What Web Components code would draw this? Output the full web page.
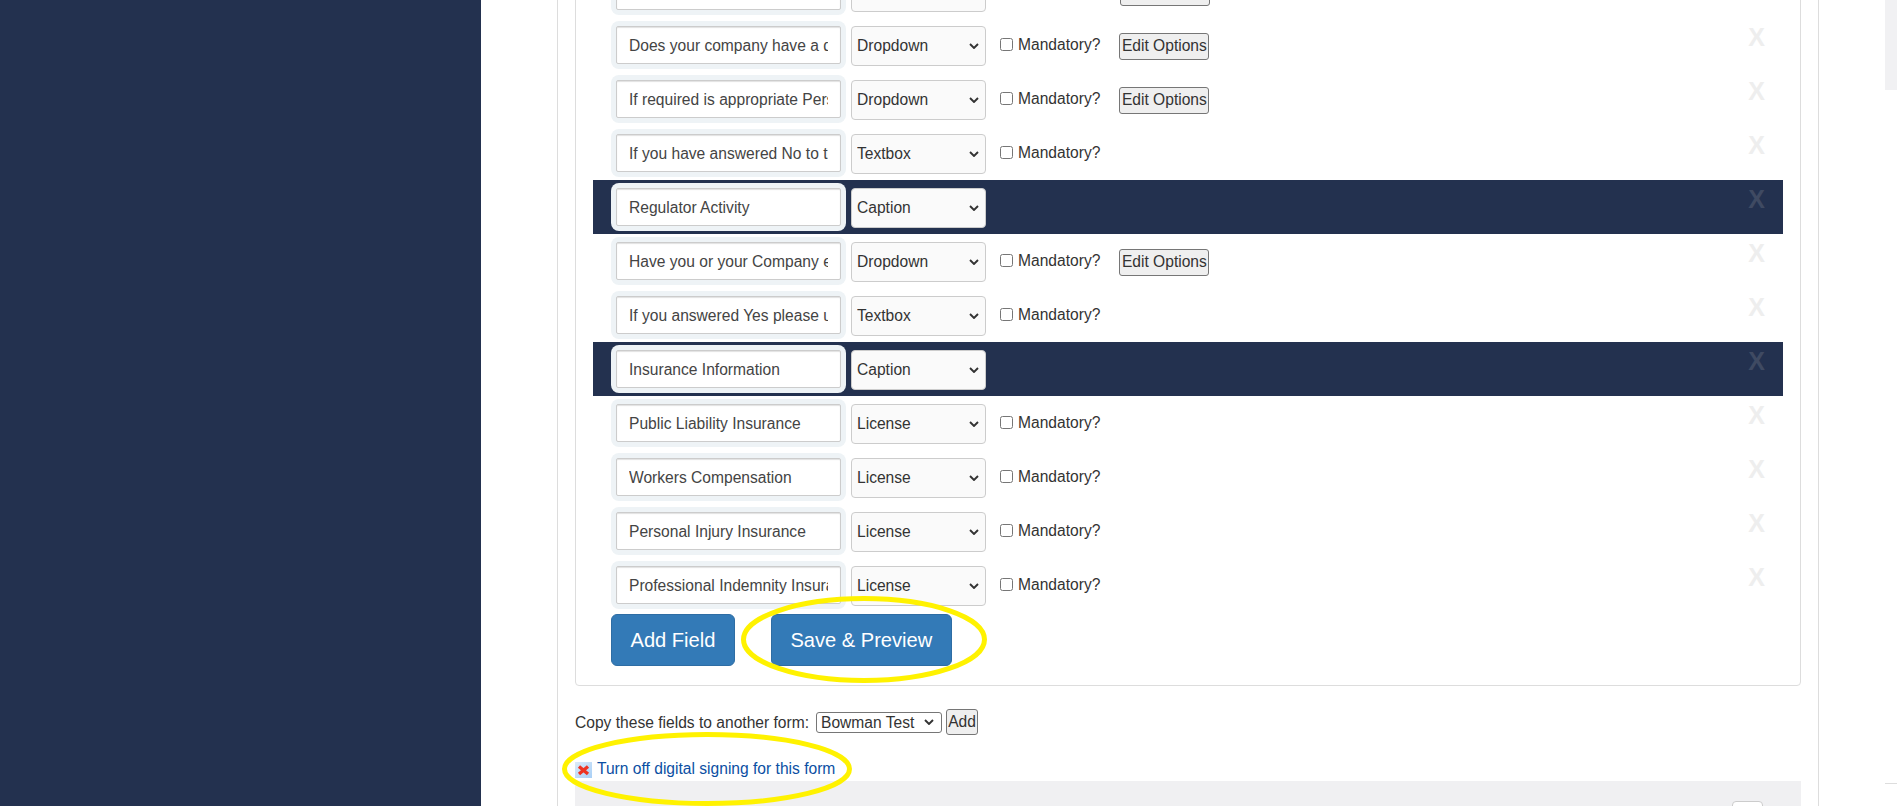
<!DOCTYPE html>
<html><head><meta charset="utf-8"><title>Form fields</title>
<style>
html,body{margin:0;padding:0;height:806px;overflow:hidden;background:#fff;font:15.6px "Liberation Sans",Arial,sans-serif;color:#333}
</style></head><body>
<app-shell>
  <form-sheet>
    <field-panel>
      <field-row type="Dropdown" edit ghost></field-row>
      <field-row label="Does your company have a documented policy" type="Dropdown" edit></field-row>
      <field-row label="If required is appropriate Personal Protective" type="Dropdown" edit></field-row>
      <field-row label="If you have answered No to the above" type="Textbox"></field-row>
      <field-row label="Regulator Activity" type="Caption"></field-row>
      <field-row label="Have you or your Company ever been" type="Dropdown" edit></field-row>
      <field-row label="If you answered Yes please upload details" type="Textbox"></field-row>
      <field-row label="Insurance Information" type="Caption"></field-row>
      <field-row label="Public Liability Insurance" type="License"></field-row>
      <field-row label="Workers Compensation" type="License"></field-row>
      <field-row label="Personal Injury Insurance" type="License"></field-row>
      <field-row label="Professional Indemnity Insurance" type="License"></field-row>
      <panel-actions slot="actions">
        <action-button>Add Field</action-button>
        <action-button>Save &amp; Preview</action-button>
      </panel-actions>
    </field-panel>
    <copy-bar></copy-bar>
    <sign-link>Turn off digital signing for this form</sign-link>
    <grey-bar></grey-bar>
  </form-sheet>
</app-shell>
<script>
const chevron="url(\"data:image/svg+xml,%3Csvg xmlns='http://www.w3.org/2000/svg' width='10' height='6' viewBox='0 0 10 6'%3E%3Cpath d='M1 1l4 4 4-4' fill='none' stroke='%23333' stroke-width='1.9'/%3E%3C/svg%3E\")";
function def(name, html){
  customElements.define(name, class extends HTMLElement{
    connectedCallback(){
      if(this.shadowRoot) return;
      const r=this.attachShadow({mode:'open'});
      r.innerHTML=typeof html==='function'?html(this):html;
    }
  });
}
def('app-shell',`<style>
:host{display:grid;grid-template-columns:481px 1fr 12px;height:806px;position:relative;overflow:hidden}
.side{background:#23314f}
.rail{display:flex;flex-direction:column}
.thumb{height:90px;background:#f1f1f3}
.tick{margin-top:693px;height:1px;background:#ddd}
.ring{position:absolute;overflow:visible;pointer-events:none}
</style>
<div class="side"></div>
<div class="main"><slot></slot></div>
<div class="rail"><div class="thumb"></div><div class="tick"></div></div>
<svg class="ring" style="left:741px;top:596px" width="246" height="87" viewBox="0 0 246 87"><ellipse cx="123" cy="43.5" rx="120.5" ry="41" fill="none" stroke="#fff200" stroke-width="5"/></svg>
<svg class="ring" style="left:562px;top:732px" width="290" height="74" viewBox="0 0 290 74"><ellipse cx="145" cy="37" rx="142.5" ry="34.5" fill="none" stroke="#fff200" stroke-width="5"/></svg>`);

def('form-sheet',`<style>
:host{display:block;box-sizing:border-box;margin:-37px 0 0 76px;width:1262px;border:solid #ddd;border-width:0 1px;padding:0 17px;height:900px}
</style><slot></slot>`);

def('field-panel',`<style>
:host{display:block;border:1px solid #ddd;border-radius:4px;padding:0 17px 19px}
</style><slot></slot><slot name="actions"></slot>`);

def('panel-actions',`<style>
:host{display:flex;gap:36px;margin-top:2px;padding-left:18px}
</style><slot></slot>`);

def('action-button',`<style>
:host{display:block}
button{box-sizing:border-box;height:52px;padding:0 18.5px;background:#337ab7;border:1px solid #2e6da4;border-radius:6px;color:#fff;font:20.1px "Liberation Sans",Arial,sans-serif}
</style><button type="button"><slot></slot></button>`);

def('field-row',h=>{
  const type=h.getAttribute('type'), caption=type==='Caption', ghost=h.hasAttribute('ghost');
  const label=(h.getAttribute('label')||'').replace(/"/g,'&quot;');
  const opts=ghost?'<option></option>':['Dropdown','Textbox','Caption','License'].map(o=>`<option${o===type?' selected':''}>${o}</option>`).join('');
  return `<style>
:host{display:flex;align-items:flex-start;box-sizing:border-box;height:54px;padding:0 18px;${caption?'background:#23314f;':''}font:15.6px "Liberation Sans",Arial,sans-serif;color:#333}
.well{box-sizing:border-box;width:235px;height:48px;margin-top:3px;padding:5px;background:#eef3f6;border-radius:8px}
input[type=text]{box-sizing:border-box;display:block;width:225px;height:38px;padding:2px 12px 0;border:1px solid #ccc;border-radius:2px;background:#fff;box-shadow:inset 0 1px 1px rgba(0,0,0,.12);font:inherit;color:#444;outline:0}
select{appearance:none;-webkit-appearance:none;box-sizing:border-box;width:135px;height:40px;margin:8px 0 0 5px;padding:0 0 2px 5px;border:1px solid #ccc;border-radius:4px;background:#fafafa ${chevron} no-repeat 117px 16px;font:inherit;color:#333}
label{display:flex;align-items:center;margin:15px 0 0 14px;height:24px}
input[type=checkbox]{width:13px;height:13px;margin:0 5px 0 0;position:relative;top:-1px}
.edit{box-sizing:border-box;height:27px;width:90px;margin:15px 0 0 19px;padding:0 0 2px;border:1px solid #767676;border-radius:3px;background:#efefef;font:inherit;color:#333}
.spacer{width:${ghost?'101px':'0'}}
.x{margin-left:auto;font:bold 25px/28px "Liberation Sans",Arial,sans-serif;color:${caption?'#3f4a62':'#eeeeee'};margin-top:5px;width:17px;text-align:center}
</style>
<div class="well"><input type="text" value="${label}"></div>
<select>${opts}</select>
${caption||ghost?'':'<label><input type="checkbox">Mandatory?</label>'}
${ghost?'<div class="spacer" style="margin-left:14px"></div>':''}
${h.hasAttribute('edit')?`<button class="edit" type="button">${ghost?'':'Edit Options'}</button>`:''}
${ghost?'':'<span class="x">X</span>'}`;
});

def('copy-bar',`<style>
:host{display:flex;align-items:center;height:26px;margin-top:23px;font:15.6px "Liberation Sans",Arial,sans-serif;color:#333}
span{width:235px;white-space:nowrap;padding-top:2px}
select{appearance:none;-webkit-appearance:none;box-sizing:border-box;width:126px;height:21px;margin-left:6px;padding:0 0 0 4px;border:1px solid #767676;border-radius:3px;background:#fff ${chevron} no-repeat 107px 6px;font:inherit;color:#333}
button{box-sizing:border-box;width:32px;height:26px;margin-left:4px;padding:0;border:1px solid #767676;border-radius:3px;background:#efefef;font:inherit;color:#333}
</style><span>Copy these fields to another form:</span><select><option>Bowman Test</option></select><button type="button">Add</button>`);

def('sign-link',`<style>
:host{display:flex;align-items:center;height:16px;margin:27px 0 3px;font:15.6px "Liberation Sans",Arial,sans-serif}
svg{flex:none;margin-right:5px}
a{color:#0b4fa3;text-decoration:none;margin-top:-2px}
</style><svg width="17" height="16" viewBox="0 0 17 16"><defs><linearGradient id="g" x1="0" y1="0" x2="1" y2="1"><stop offset="0" stop-color="#dcebf9"/><stop offset="1" stop-color="#a8cff6"/></linearGradient></defs><rect width="17" height="16" fill="url(#g)"/><path d="M4 4.5 13 12M13 4.5 4 12" stroke="#ee3322" stroke-width="3.4" fill="none"/></svg><a href="#"><slot></slot></a>`);

def('grey-bar',`<style>
:host{display:block;height:60px;background:#f0f0f2;position:relative}
div{margin-left:1157px;padding-top:20px}
i{display:block;box-sizing:border-box;width:31px;height:30px;background:#fff;border:1px solid #ccc;border-radius:4px}
</style><div><i></i></div>`);
</script>
</body></html>
